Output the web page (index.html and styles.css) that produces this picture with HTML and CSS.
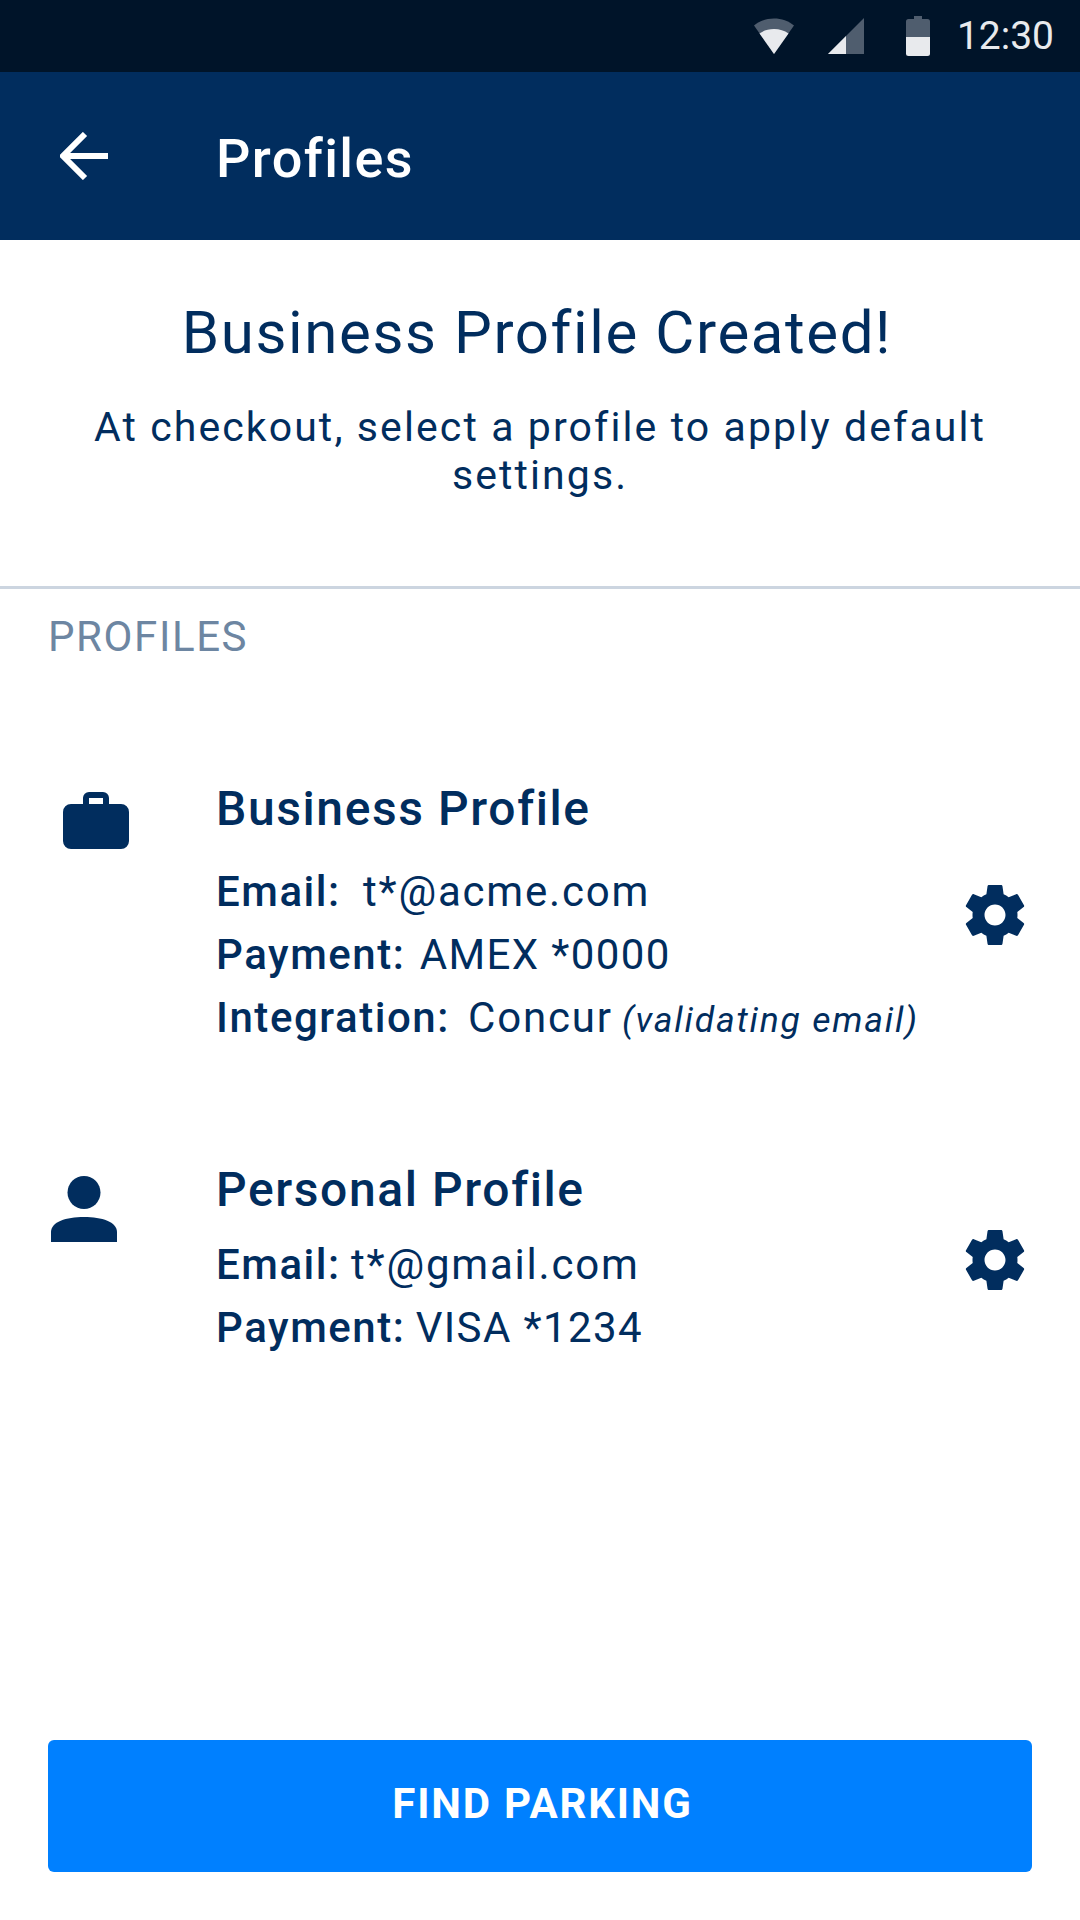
FILE: index.html
```html
<!DOCTYPE html>
<html lang="en">
<head>
    <meta charset="UTF-8">
    <meta name="viewport" content="width=device-width, initial-scale=1.0">
    <title>Profiles</title>
    <link rel="stylesheet" href="styles.css">
</head>
<body>

<div id="app">
    <div class="status-bar">
        <svg class="icon-wifi" width="40" height="36" viewBox="0 0 40 36">
            <path d="M0 7.5C5.5 3 12.5 0.5 20 0.5S34.500 3 40 7.500L20 36Z" fill="#4f5d6e"/>
            <path d="M5.500 15.500C9.500 12.500 14.500 11 20 11S30.500 12.500 34.500 15.500L20 36Z" fill="#e8eaed"/>
        </svg>
        <svg class="icon-signal" width="36" height="36" viewBox="0 0 36 36">
            <path d="M36 0V36H0Z" fill="#4f5d6e"/>
            <path d="M18 18V36H0Z" fill="#e8eaed"/>
        </svg>
        <svg class="icon-battery" width="24" height="40" viewBox="0 0 24 40">
            <path d="M8 0H16V3H21.500A2.500 2.500 0 0 1 24 5.500V21H0V5.500A2.500 2.500 0 0 1 2.500 3H8Z" fill="#4f5d6e"/>
            <path d="M0 21H24V37.500A2.500 2.500 0 0 1 21.500 40H2.500A2.500 2.500 0 0 1 0 37.500Z" fill="#e8eaed"/>
        </svg>
        <span class="clock">12:30</span>
    </div>

    <div class="app-bar">
        <svg class="back" width="48" height="48" viewBox="0 0 48 48">
            <path d="M48 24H3M25 2L3 24L25 46" fill="none" stroke="#fff" stroke-width="6"/>
        </svg>
        <span class="app-title">Profiles</span>
    </div>

    <div class="intro">
        <h1>Business Profile Created!</h1>
        <p>At checkout, select a profile to apply default settings.</p>
    </div>

    <div class="section">
        <div class="section-label">PROFILES</div>

        <div class="profile profile-business">
            <div class="profile-icon">
                <svg width="66" height="57" viewBox="0 0 66 57">
                    <path fill-rule="evenodd" d="M20 12V6A6 6 0 0 1 26 0H40A6 6 0 0 1 46 6V12H58A8 8 0 0 1 66 20V49A8 8 0 0 1 58 57H8A8 8 0 0 1 0 49V20A8 8 0 0 1 8 12ZM26 6V12H40V6Z" fill="#012d5e"/>
                </svg>
            </div>
            <div class="profile-info">
                <h2>Business Profile</h2>
                <div class="line"><b>Email:</b> <span class="gap-email">t*@acme.com</span></div>
                <div class="line"><b>Payment:</b> <span class="gap-payment card">AMEX *0000</span></div>
                <div class="line"><b>Integration:</b> <span class="gap-integration">Concur</span> <i>(validating email)</i></div>
            </div>
            <svg class="gear" width="60" height="60" viewBox="2 2 20 20">
                <path fill-rule="evenodd" d="M19.430 12.980c.040-.320.070-.640.070-.980s-.030-.660-.070-.980l2.110-1.650c.190-.150.240-.420.120-.640l-2-3.460c-.120-.220-.390-.300-.610-.220l-2.490 1c-.520-.400-1.080-.730-1.690-.980l-.380-2.650C14.460 2.180 14.250 2 14 2h-4c-.250 0-.460.180-.490.420l-.380 2.650c-.610.250-1.170.590-1.690.980l-2.490-1c-.230-.090-.490 0-.610.220l-2 3.460c-.130.220-.070.490.120.640l2.110 1.650c-.040.320-.070.650-.070.980s.030.660.070.980l-2.110 1.650c-.190.150-.240.420-.120.640l2 3.460c.120.220.390.300.610.220l2.490-1c.520.400 1.080.730 1.690.980l.380 2.650c.030.240.240.420.490.420h4c.250 0 .460-.180.490-.420l.380-2.650c.610-.250 1.170-.590 1.690-.980l2.490 1c.230.090.490 0 .610-.220l2-3.460c.120-.220.070-.490-.120-.640l-2.110-1.650zM12 15.500c-1.930 0-3.500-1.570-3.500-3.500s1.570-3.500 3.500-3.500 3.500 1.570 3.500 3.500-1.570 3.500-3.500 3.500z" fill="#012d5e"/>
            </svg>
        </div>

        <div class="profile profile-personal">
            <div class="profile-icon">
                <svg width="66" height="66" viewBox="0 0 66 66">
                    <circle cx="33" cy="16.500" r="16.500" fill="#012d5e"/>
                    <path d="M0 66V56C0 46 15 41 33 41S66 46 66 56V66Z" fill="#012d5e"/>
                </svg>
            </div>
            <div class="profile-info">
                <h2>Personal Profile</h2>
                <div class="line"><b>Email:</b> t*@gmail.com</div>
                <div class="line"><b>Payment:</b> <span class="card">VISA *1234</span></div>
            </div>
            <svg class="gear" width="60" height="60" viewBox="2 2 20 20">
                <path fill-rule="evenodd" d="M19.430 12.980c.040-.320.070-.640.070-.980s-.030-.660-.070-.980l2.110-1.650c.190-.150.240-.420.120-.640l-2-3.460c-.120-.220-.390-.300-.610-.220l-2.490 1c-.520-.400-1.080-.730-1.690-.980l-.380-2.650C14.460 2.180 14.250 2 14 2h-4c-.250 0-.460.180-.490.420l-.380 2.650c-.610.250-1.170.590-1.690.980l-2.490-1c-.230-.090-.490 0-.610.220l-2 3.460c-.130.220-.070.490.120.640l2.110 1.650c-.040.320-.070.650-.070.980s.030.660.070.980l-2.110 1.650c-.190.150-.240.420-.120.640l2 3.460c.120.220.390.300.610.220l2.490-1c.520.400 1.080.730 1.690.980l.380 2.650c.030.240.240.420.490.420h4c.250 0 .460-.180.490-.420l.380-2.650c.610-.250 1.170-.590 1.690-.980l2.490 1c.230.090.490 0 .610-.220l2-3.460c.120-.220.070-.490-.120-.640l-2.110-1.650zM12 15.500c-1.930 0-3.500-1.570-3.500-3.500s1.570-3.500 3.500-3.500 3.500 1.570 3.500 3.500-1.570 3.500-3.500 3.500z" fill="#012d5e"/>
            </svg>
        </div>
    </div>

    <button class="find-parking">FIND PARKING</button>
</div>

</body>
</html>
```

FILE: styles.css
```css
* {
    box-sizing: border-box;
}
body {
    font-family: Roboto, "Liberation Sans", sans-serif;
    margin: 0;
    background-color: #fff;
    color: #012d5e;
}
#app {
    display: flex;
    flex-direction: column;
    width: 1080px;
    height: 1920px;
}
.status-bar {
    display: flex;
    align-items: center;
    justify-content: flex-end;
    flex-shrink: 0;
    height: 72px;
    padding-right: 26px;
    background: #001429;
}
.icon-wifi {
    margin-right: 34px;
}
.icon-signal {
    margin-right: 42px;
}
.icon-battery {
    margin-right: 27px;
}
.clock {
    font-size: 39px;
    color: #e8eaed;
}
.app-bar {
    display: flex;
    align-items: center;
    flex-shrink: 0;
    height: 168px;
    padding-left: 60px;
    background: #012d5e;
    color: #fff;
}
.back {
    margin-right: 108px;
}
.app-title {
    margin-top: 4px;
    font-size: 54px;
    font-weight: 500;
    letter-spacing: 1.4px;
}
.intro {
    height: 349px;
    padding: 59px 48px 0;
    text-align: center;
    border-bottom: 3px solid #ccd5e0;
}
.intro h1 {
    margin: 0 6px 36px 0;
    font-size: 60px;
    font-weight: 400;
    line-height: 68px;
    letter-spacing: 1.6px;
}
.intro p {
    margin: 0;
    font-size: 41px;
    line-height: 48px;
    letter-spacing: 2.1px;
}
.section {
    flex: 1;
}
.section-label {
    padding: 25px 48px 0;
    font-size: 42px;
    line-height: 46px;
    letter-spacing: 1.6px;
    color: #6d86a2;
}
.profile {
    position: relative;
    display: flex;
}
.profile-business {
    margin-top: 122px;
    height: 381px;
}
.profile-icon {
    width: 216px;
    padding-left: 63px;
    padding-top: 10px;
}
.profile-personal .profile-icon {
    padding-left: 51px;
    padding-top: 13px;
}
.profile-info h2 {
    margin: 0 0 16px;
    font-size: 48px;
    font-weight: 500;
    line-height: 54px;
    letter-spacing: 1.6px;
}
.profile-business h2 {
    margin-bottom: 24px;
}
.line {
    font-size: 42px;
    line-height: 63px;
    letter-spacing: 1.8px;
}
.line b {
    margin-right: -1px;
    font-weight: 500;
    letter-spacing: 1.55px;
}
.profile-personal .line b {
    margin-right: -2px;
}
.line i {
    margin-left: -3px;
    font-size: 35.5px;
}
.card {
    letter-spacing: 1.4px;
}
.gap-email {
    margin-left: 11px;
}
.gap-payment {
    margin-left: 3px;
}
.gap-integration {
    margin-left: 7px;
}
.gear {
    position: absolute;
    left: 965px;
    top: 103px;
}
.profile-personal .gear {
    top: 67px;
}
.find-parking {
    flex-shrink: 0;
    height: 132px;
    margin: 0 48px 48px;
    padding: 0 0 6px 5px;
    border: none;
    border-radius: 6px;
    background: #0080ff;
    color: #fff;
    font-family: inherit;
    font-size: 42px;
    font-weight: 700;
    letter-spacing: 1.8px;
}
```
